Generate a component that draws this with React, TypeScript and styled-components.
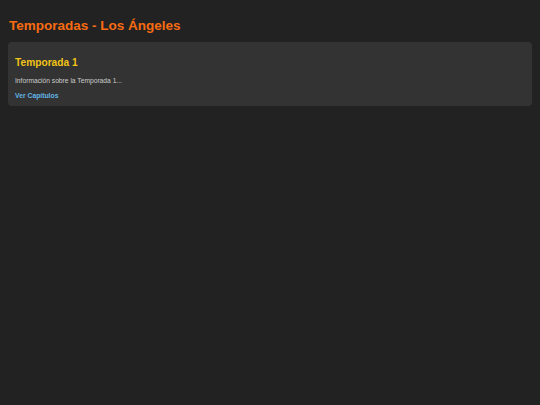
import React from "react";
import styled, { createGlobalStyle } from "styled-components";

const GlobalStyle = createGlobalStyle`
  html, body {
    margin: 0;
    background-color: #222222;
  }
  body {
    padding: 8px;
    font-family: "Liberation Sans", Arial, sans-serif;
    color: #dddddd;
  }
`;

const Title = styled.h1`
  margin: 10px 0 8px 1px;
  font-size: 13.5px;
  line-height: 16px;
  font-weight: bold;
  color: #f76b12;
`;

const SeasonCard = styled.div`
  background-color: #333333;
  border-radius: 4px;
  padding: 15px 7px 6px;
`;

const SeasonTitle = styled.h2`
  margin: 0 0 8px;
  font-size: 10.2px;
  line-height: 12px;
  font-weight: bold;
  color: #f2c417;
`;

const SeasonInfo = styled.p`
  margin: 0 0 7px;
  font-size: 6.7px;
  line-height: 8px;
  color: #cccccc;
`;

const ChaptersLink = styled.a`
  display: block;
  font-size: 6.8px;
  line-height: 8px;
  font-weight: bold;
  color: #62b4e4;
  text-decoration: none;
  cursor: pointer;
`;

const seasons = [{ id: 1, info: "Información sobre la Temporada 1..." }];

export default function App() {
  return (
    <>
      <GlobalStyle />
      <Title>Temporadas - Los Ángeles</Title>
      {seasons.map((s) => (
        <SeasonCard key={s.id}>
          <SeasonTitle>Temporada {s.id}</SeasonTitle>
          <SeasonInfo>{s.info}</SeasonInfo>
          <ChaptersLink>Ver Capítulos</ChaptersLink>
        </SeasonCard>
      ))}
    </>
  );
}
